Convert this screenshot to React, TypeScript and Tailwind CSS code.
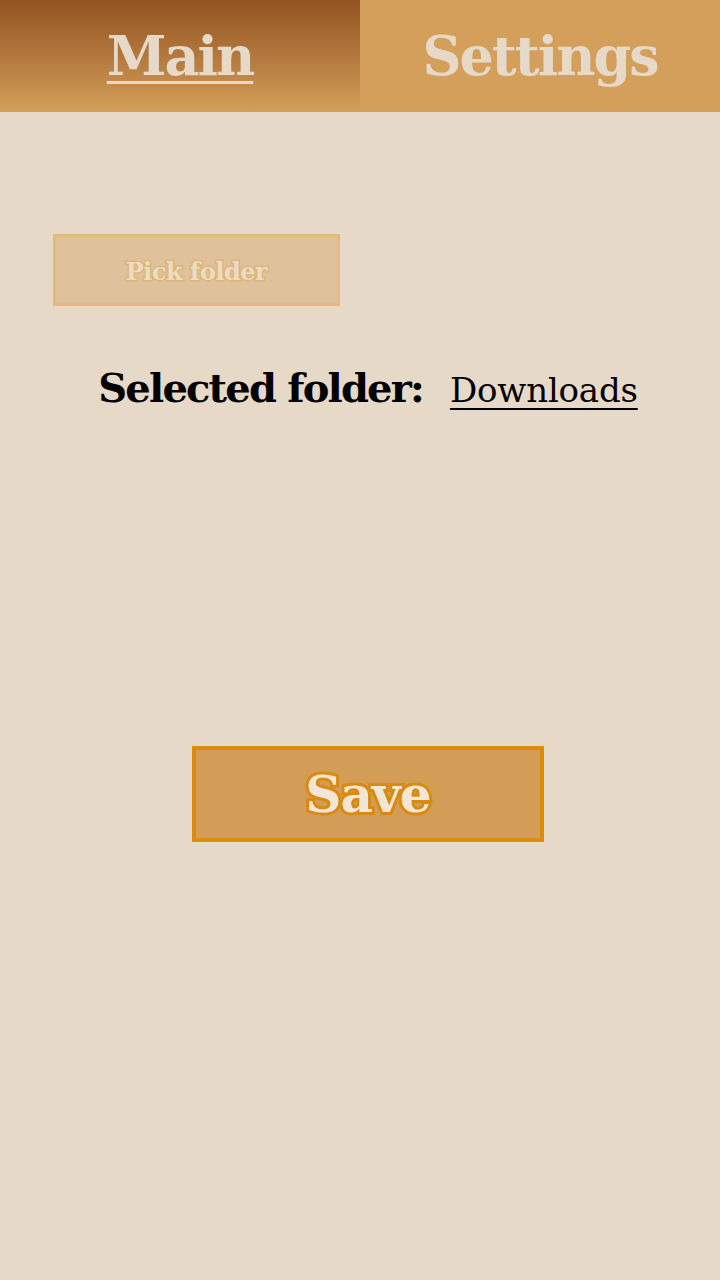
import React from "react";

const serif = { fontFamily: '"DejaVu Serif", "Liberation Serif", serif' };

export default function App() {
  return (
    <div className="min-h-screen w-full bg-[#e6d9c8]" style={serif}>
      <div className="flex h-[112px] w-full">
        <div className="flex w-1/2 items-center justify-center bg-gradient-to-b from-[#925320] to-[#d49f5a]">
          <span className="text-[54px] font-bold leading-none text-[#e6d9c8] underline decoration-[3px] underline-offset-[6px] tracking-[-2px]">
            Main
          </span>
        </div>
        <div className="flex w-1/2 items-center justify-center bg-[#d49f5b]">
          <span className="text-[54px] font-bold leading-none text-[#e6d9c8] tracking-[-2px]">
            Settings
          </span>
        </div>
      </div>

      <div className="flex flex-col pl-4">
        <div className="mt-[122px] ml-[37px] flex h-[72px] w-[287px] items-center justify-center border-[3px] border-[#e4b97b] bg-[#dfc19b] pt-[3px]">
          <span className="text-[24px] font-bold text-[#eadcc6] [-webkit-text-stroke:3px_#e0b676] [paint-order:stroke_fill] tracking-[-0.5px]">
            Pick folder
          </span>
        </div>

        <div className="mt-[52px] flex items-baseline justify-center gap-[27px]">
          <span className="text-[40px] font-bold text-black tracking-[-1.8px]">Selected folder:</span>
          <span className="text-[34px] text-black underline decoration-2 underline-offset-[6px] tracking-[-0.2px]">
            Downloads
          </span>
        </div>

        <div className="mt-[328px] flex justify-center">
          <div className="flex h-[96px] w-[352px] items-center justify-center border-4 border-[#e08a0b] bg-[#d49d57]">
            <span className="text-[50px] font-bold text-[#f4e6d5] [-webkit-text-stroke:6px_#d98a10] [paint-order:stroke_fill] tracking-[-1px]">
              Save
            </span>
          </div>
        </div>
      </div>
    </div>
  );
}
